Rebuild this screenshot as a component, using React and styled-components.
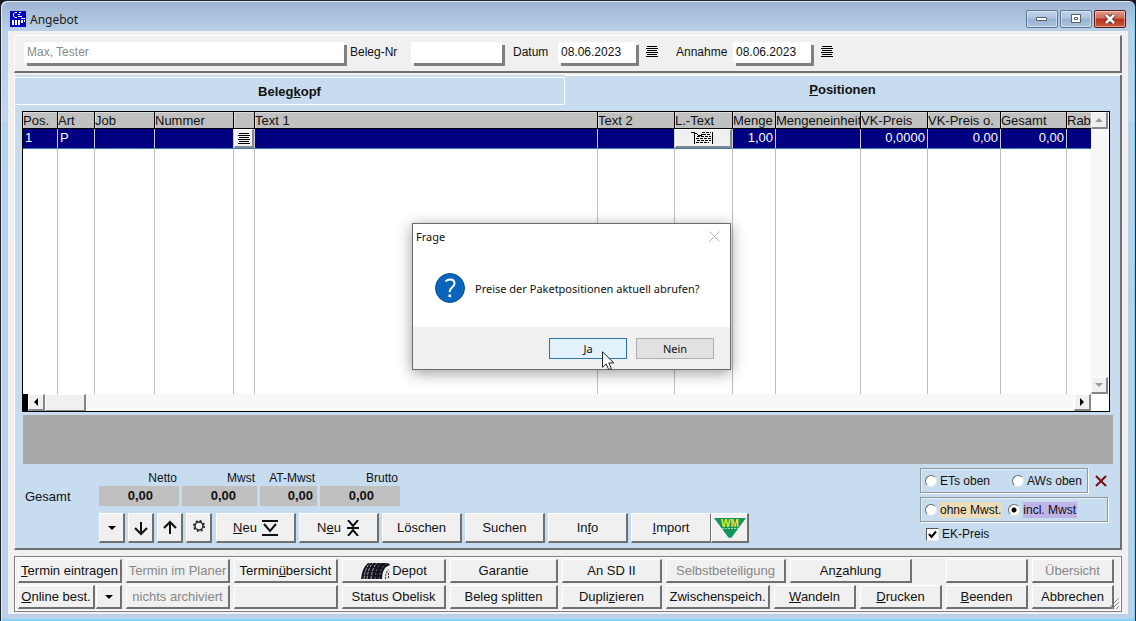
import React from 'react';
import styled, { createGlobalStyle, ThemeProvider } from 'styled-components';

const theme = {
  face: '#f0f0f0',
  panel: '#c7dcee',
  shade: '#6e7072',
  softShade: '#8f979d',
  light: '#ffffff',
  header: '#c0c0c0',
  selection: '#000080',
  ui: '"Liberation Sans", Arial, sans-serif',
  dialog: '"Noto Sans", "Open Sans", sans-serif',
};

const GlobalStyle = createGlobalStyle`
  * {
    box-sizing: border-box;
  }

  body {
    margin: 0;
    background: #15171c;
    font-family: ${theme.ui};
    font-size: 12px;
    color: #111;
  }

  button, input {
    font-family: inherit;
    color: inherit;
    margin: 0;
  }

  svg {
    display: block;
    flex: none;
  }
`;

const Window = styled.div`
  position: relative;
  display: flex;
  flex-direction: column;
  min-height: 100vh;
  border: 1px solid #1d2430;
  border-radius: 7px 7px 0 0;
  background: linear-gradient(#9db5d2, #bad0e8 30px, #c3d6ec 120px, #b9d0ea 121px, #bdd0e8);
  box-shadow: inset 1px 1px 0 #dfe9f4, inset -1px -2px 0 #7fd3ee;
`;

const TitleBar = styled.header`
  display: flex;
  align-items: center;
  height: 30px;
  padding: 6px 9px 0;
  gap: 4px;
`;

const Title = styled.h1`
  flex: 1;
  margin: 0;
  padding-top: 2px;
  font: 12px/16px ${({ theme }) => theme.dialog};
  color: #1b1b1b;
`;

const CaptionButtons = styled.div`
  display: flex;
  gap: 2px;
`;

const CaptionButton = styled.button`
  display: flex;
  align-items: center;
  justify-content: center;
  width: 32px;
  height: 18px;
  padding: 0;
  border: 1px solid ${({ $close }) => ($close ? '#5c1a14' : '#5f7896')};
  border-radius: 2px;
  background: ${({ $close }) =>
    $close
      ? 'linear-gradient(#dd9b8b, #cf6a55 45%, #b8321c 50%, #c9583c)'
      : 'linear-gradient(#bfd2e8, #adc4de 45%, #97b2d0 50%, #acc6e0)'};
  box-shadow: inset 0 0 0 1px rgba(255, 255, 255, 0.45);
`;

const Client = styled.main`
  display: flex;
  flex-direction: column;
  flex: 1;
  margin: 0 7px 7px;
  padding: 4px 6px 2px;
  background: ${({ theme }) => theme.face};
`;

const HeadPanel = styled.section`
  display: flex;
  align-items: flex-start;
  height: 38px;
  padding: 6px 9px 0;
  border: solid;
  border-width: 1px 2px 2px 1px;
  border-color: #fff ${({ theme }) => theme.shade} ${({ theme }) => theme.shade} #fff;
`;

const FieldLabel = styled.label`
  width: ${({ $width }) => $width}px;
  margin-left: ${({ $gap }) => $gap}px;
  line-height: 20px;
`;

const Field = styled.input`
  width: ${({ $width }) => $width}px;
  height: 21px;
  padding: 0 3px 2px;
  border: 0;
  background: #fff;
  box-shadow: 3px 3px 0 #808080;
  font-size: 12px;
  color: ${({ $muted }) => ($muted ? '#8a8a8a' : '#111')};
`;

const PlainButton = styled.button`
  padding: 0;
  border: 0;
  background: none;
`;

const PickButton = styled(PlainButton)`
  margin: 4px 0 0 10px;
`;

const TabPanel = styled.section`
  display: flex;
  flex-direction: column;
  flex: 1;
  margin-top: 2px;
  border: solid;
  border-width: 0 2px 2px 1px;
  border-color: #fff ${({ theme }) => theme.shade} ${({ theme }) => theme.shade} #fff;
  background: ${({ theme }) => theme.panel};
`;

const Tabs = styled.div`
  display: flex;
  align-items: flex-end;
  height: 30px;
`;

const Tab = styled.button`
  flex: ${({ $size }) => `${$size} 1 ${$size}px`};
  height: ${({ $active }) => ($active ? 30 : 28)}px;
  padding: ${({ $active }) => ($active ? '0 0 2px' : '0')};
  border: solid #fff;
  border-width: ${({ $active }) => ($active ? '1px 0 0' : '1px 1px 1px 0')};
  background: ${({ theme }) => theme.panel};
  font-size: 13px;
  font-weight: bold;
`;

const TabBody = styled.div`
  padding: 6px 7px 0 8px;
`;

const GridFrame = styled.div`
  display: grid;
  grid-template-columns: minmax(0, 1fr) 18px;
  margin-right: 3px;
  margin-left: -1px;
  border: 1px solid #000;
  background: #fff;
`;

const Table = styled.table`
  width: 100%;
  table-layout: fixed;
  border-collapse: separate;
  border-spacing: 0;
  font-size: 13px;
`;

const HeadCell = styled.th`
  height: 17px;
  padding: 2px 0 0;
  border: solid #000;
  border-width: 0 1px 1px 0;
  background: ${({ theme }) => theme.header};
  box-shadow: inset 1px 1px 0 #dcdcdc;
  font-weight: normal;
  line-height: 14px;
  text-align: left;
  white-space: nowrap;
  overflow: hidden;

  &:last-child {
    border-right: 0;
  }
`;

const Cell = styled.td`
  height: 20px;
  padding: ${({ $flush }) => ($flush ? '0' : '0 2px')};
  border: solid;
  border-width: 0 1px 1px 0;
  border-color: #c9c9d8 #c9c9d8 #3c7ba6;
  background: ${({ theme }) => theme.selection};
  color: #fff;
  line-height: 18px;
  text-align: ${({ $right }) => ($right ? 'right' : 'left')};
  vertical-align: top;

  &:last-child {
    border-right: 0;
  }
`;

const EmptyCell = styled.td`
  height: 245px;
  padding: 0;
  border-right: 1px solid #bdbdbd;

  &:last-child {
    border-right: 0;
  }
`;

const CellButton = styled.button`
  display: flex;
  align-items: center;
  justify-content: center;
  width: 100%;
  height: 19px;
  padding: 0;
  border: solid;
  border-width: 1px 2px 2px 1px;
  border-color: #fff #84888c #84888c #fff;
  background: ${({ theme }) => theme.face};
`;

const track = 'repeating-conic-gradient(#f2f2f2 0 25%, #fff 0 50%) 0 0 / 2px 2px';

const VScroll = styled.div`
  display: flex;
  flex-direction: column;
  justify-content: space-between;
  width: 17px;
  background: ${track};
`;

const HScroll = styled.div`
  display: flex;
  border-left: 5px solid #000;
  background: ${track};
`;

const ScrollButton = styled.button`
  display: flex;
  align-items: center;
  justify-content: center;
  width: 17px;
  height: 17px;
  padding: 0;
  border: solid;
  border-width: 1px 2px 2px 1px;
  border-color: #fff #84888c #84888c #fff;
  background: ${({ theme }) => theme.face};
`;

const Thumb = styled.div`
  width: 41px;
  margin-right: auto;
  border: solid;
  border-width: 1px 2px 1px 1px;
  border-color: #fff #84888c #84888c #fff;
  background: ${({ theme }) => theme.face};
`;

const Corner = styled.div`
  background: #fff;
`;

const InfoBar = styled.div`
  height: 49px;
  margin-top: 3px;
  background: #a9a9a9;
`;

const Footer = styled.div`
  display: flex;
  justify-content: space-between;
`;

const FooterLeft = styled.div`
  padding-top: 7px;
`;

const Totals = styled.div`
  display: flex;
  align-items: flex-end;
  gap: 3px;
`;

const TotalsCaption = styled.div`
  width: 73px;
  padding-left: 2px;
  font-size: 13px;
  line-height: 18px;
`;

const Total = styled.div`
  width: ${({ $width }) => $width}px;
  text-align: right;
`;

const TotalLabel = styled.div`
  padding-right: 2px;
  line-height: 15px;
`;

const TotalValue = styled.output`
  display: block;
  height: 20px;
  padding-right: ${({ $inset }) => $inset}px;
  background: ${({ theme }) => theme.header};
  font-size: 13px;
  font-weight: bold;
  line-height: 20px;
`;

const Toolbar = styled.div`
  display: flex;
  gap: 4px;
  padding: 7px 0 5px 76px;
`;

const ToolGroup = styled.div`
  display: flex;
  gap: 3px;
`;

const Pair = styled.div`
  display: flex;
`;

const Button = styled.button`
  display: flex;
  align-items: center;
  justify-content: center;
  padding: 0;
  border: solid;
  border-width: 1px 2px 2px 1px;
  border-color: #fff ${({ theme }) => theme.shade} ${({ theme }) => theme.shade} #fff;
  background: ${({ theme }) => theme.face};
  font-size: 13px;
  white-space: nowrap;

  &:disabled {
    color: #878787;
  }
`;

const ToolButton = styled(Button)`
  width: ${({ $width }) => $width || 80}px;
  height: 30px;
  gap: 5px;
  border-right-width: ${({ $joined }) => ($joined ? 1 : 2)}px;
`;

const Options = styled.div`
  width: 193px;
  padding-top: 4px;
`;

const OptionRow = styled.div`
  display: flex;
  align-items: center;
  margin-bottom: 4px;
  gap: 7px;
`;

const OptionBox = styled.div`
  display: flex;
  align-items: center;
  width: ${({ $width }) => $width}px;
  height: 25px;
  padding-left: 4px;
  gap: ${({ $gap }) => $gap}px;
  border: 1px solid ${({ theme }) => theme.softShade};
  box-shadow: 1px 1px 0 #fff, inset 1px 1px 0 #e4eff8;
`;

const Option = styled.label`
  display: flex;
  align-items: center;
  gap: 3px;
  white-space: nowrap;
`;

const OptionText = styled.span`
  padding-right: 1px;
  background: ${({ $tint }) => $tint || 'transparent'};
  line-height: 16px;
`;

const Radio = styled.input`
  appearance: none;
  width: 12px;
  height: 12px;
  border: 1px solid;
  border-color: #6c6c6c #e8e8e8 #e8e8e8 #6c6c6c;
  border-radius: 50%;
  background: #fff;

  &:checked {
    background: radial-gradient(circle, #000 0 2px, #fff 3px);
  }
`;

const CheckOption = styled(Option)`
  padding-left: 6px;
`;

const CheckBox = styled.span`
  display: grid;
  width: 13px;
  height: 13px;

  > * {
    grid-area: 1 / 1;
  }

  svg {
    pointer-events: none;
  }
`;

const Check = styled.input`
  appearance: none;
  width: 13px;
  height: 13px;
  border: 1px solid;
  border-color: #555 #e8e8e8 #e8e8e8 #555;
  background: #fff;
`;

const ActionPanel = styled.section`
  position: relative;
  display: flex;
  flex-direction: column;
  gap: 2px;
  margin-top: 6px;
  padding: 2px 7px 2px 3px;
  border: 1px solid #808080;
  box-shadow: inset 1px 1px 0 #fff, inset -1px -1px 0 #fff;
`;

const ActionRow = styled.div`
  display: flex;
  gap: 4px;
`;

const ActionButton = styled(Button)`
  flex: ${({ $size }) => `${$size} 1 ${$size}px`};
  min-width: 0;
  height: 24px;
  gap: 1px;
`;

const ActionPair = styled.div`
  display: flex;
  flex: 104 1 104px;
  gap: 1px;
`;

const Spacer = styled.div`
  flex: 26 1 26px;
`;

const Grip = styled.svg`
  position: absolute;
  right: 2px;
  bottom: 2px;
`;

const Dialog = styled.div`
  position: absolute;
  top: 222px;
  left: 411px;
  width: 319px;
  border: 1px solid #6b6b6b;
  background: #fff;
  box-shadow: 0 3px 14px rgba(0, 0, 0, 0.4);
  font-family: ${({ theme }) => theme.dialog};
  font-size: 11px;
`;

const DialogHead = styled.div`
  display: flex;
  align-items: center;
  justify-content: space-between;
  height: 25px;
  padding: 0 10px 0 3px;
`;

const DialogTitle = styled.h2`
  margin: 0;
  font-size: 11px;
  font-weight: normal;
`;

const DialogBody = styled.div`
  display: flex;
  align-items: center;
  gap: 10px;
  height: 78px;
  padding: 0 22px;
  white-space: nowrap;
`;

const DialogFoot = styled.div`
  display: flex;
  justify-content: flex-end;
  gap: 9px;
  height: 42px;
  padding: 11px 16px 0;
  background: #f0f0f0;
`;

const DialogButton = styled.button`
  width: 78px;
  height: 21px;
  padding: 0;
  border: 1px solid ${({ $hot }) => ($hot ? '#2a76a8' : '#adadad')};
  background: ${({ $hot }) => ($hot ? '#e3f1fb' : '#e1e1e1')};
  font-size: 11px;
  line-height: 19px;
`;

const Pointer = styled.svg`
  position: absolute;
  top: 127px;
  left: 189px;
`;

const AppIcon = () => (
  <svg width="16" height="16" viewBox="0 0 16 16">
    <path fill="#0404c4" d="M0 0h16v16H0z" />
    <path
      stroke="#fff"
      fill="none"
      d="M7 1.500H5L3.500 3v2L5 6.500h2M9 1.500h2M8 3.500h2M8 5.500h4M11 7.500h4"
    />
    <path fill="#fff" d="M2 9h2v5H2zM5 9h2v5H5zM8 9h2v5H8zM11 9h2v3h-2zM14 9h1v2h-1z" />
  </svg>
);

const LinesIcon = () => (
  <svg width="12" height="11" viewBox="0 0 12 11" shapeRendering="crispEdges">
    <path stroke="#000" d="M1 .5h10M0 2.500h12M1 4.500h10M0 6.500h12M1 8.500h10M0 10.500h12" />
  </svg>
);

const NoteIcon = () => (
  <svg width="24" height="14" viewBox="0 0 24 14" shapeRendering="crispEdges">
    <path stroke="#000" fill="none" d="M0 1.500h3M3.500 1v12M21.500 1v12M4 2l5 3 3-2" />
    <path
      stroke="#000"
      strokeDasharray="3 1"
      d="M11 1.500h9M6 5.500h14M12 3.500h8M5 7.500h15M6 9.500h14M5 11.500h13"
    />
  </svg>
);

const shapes = {
  down: 'M0 0h8L4 4z',
  up: 'M0 4h8L4 0z',
  left: 'M4 0v8L0 4z',
  right: 'M0 0v8l4-4z',
};

const Arrow = ({ dir, fill = '#000' }) => {
  const flat = dir === 'down' || dir === 'up';
  return (
    <svg width={flat ? 8 : 4} height={flat ? 4 : 8}>
      <path fill={fill} d={shapes[dir]} />
    </svg>
  );
};

const ToolIcon = ({ d, width = 16, height = 16, weight = 2, color = '#111' }) => (
  <svg width={width} height={height} fill="none" stroke={color} strokeWidth={weight}>
    <path d={d} />
  </svg>
);

const GearIcon = () => (
  <svg width="14" height="18" viewBox="0 0 14 18" fill="none" stroke="#222">
    <circle cx="7" cy="7" r="4" strokeWidth="1.500" />
    <circle cx="7" cy="7" r="5.200" strokeWidth="1.600" strokeDasharray="2 2.084" />
  </svg>
);

const WmLogo = () => (
  <svg width="34" height="22" viewBox="0 0 34 22">
    <path fill="#12955a" d="M1 1h32L19 20q-2 2-4 0z" />
    <text
      x="17"
      y="10"
      textAnchor="middle"
      fontFamily="Liberation Sans, sans-serif"
      fontSize="10"
      fontWeight="bold"
      fill="#f0e62c"
    >
      WM
    </text>
    <path stroke="#9fd8b5" strokeDasharray="2 1" d="M9 11.500h16" />
  </svg>
);

const TyreIcon = () => (
  <svg width="31" height="18" viewBox="0 0 31 18">
    <path fill="#14141e" d="M8 1h17q5 0 5 2l-4 2q-4 4-4 12H1Q2 6 8 1z" />
    <path
      stroke="#c4c4d0"
      strokeWidth=".9"
      strokeDasharray="3 1"
      fill="none"
      d="M4 17Q5 6 10 1M7 17Q8 6 13 1M11 17Q12 6 17 1"
    />
    <path
      stroke="#8a8a98"
      strokeWidth=".8"
      strokeDasharray="2 2"
      fill="none"
      d="M15 17Q16 6 21 1M19 17Q20 6 26 2"
    />
    <path fill="#e6e6ea" d="M24 17q0-8 4-11l2 1v10z" />
    <path stroke="#333" fill="none" strokeDasharray="2 1" d="M25.500 17q0-7 3-9M28.500 16v-6" />
  </svg>
);

const QuestionIcon = () => (
  <svg width="30" height="30" viewBox="0 0 30 30">
    <circle cx="15" cy="15" r="14.500" fill="#0a66bd" stroke="#0b4f95" />
    <path
      fill="none"
      stroke="#fff"
      strokeWidth="2"
      d="M10.500 8.500Q12 6.500 15 6.500q4.500 0 4.500 4 0 2-2.500 4t-2.200 4.700"
    />
    <path fill="#fff" d="M13.500 21.500h2.600v2.600h-2.600z" />
  </svg>
);

// "&" marks the letter that follows as the access key
const Mnemonic = ({ text }) => {
  const at = text.indexOf('&');
  if (at < 0) return <span>{text}</span>;
  return (
    <span>
      {text.slice(0, at)}
      <u>{text[at + 1]}</u>
      {text.slice(at + 2)}
    </span>
  );
};

const columns = [
  { title: 'Pos.', width: 35, value: '1' },
  { title: 'Art', width: 37, value: 'P' },
  { title: 'Job', width: 60 },
  { title: 'Nummer', width: 79 },
  { title: '', width: 21, icon: <LinesIcon />, hint: 'Auswahl' },
  { title: 'Text 1' },
  { title: 'Text 2', width: 77 },
  { title: 'L.-Text', width: 58, icon: <NoteIcon />, hint: 'Langtext' },
  { title: 'Menge', width: 43, value: '1,00', right: true },
  { title: 'Mengeneinheit', width: 85 },
  { title: 'VK-Preis', width: 67, value: '0,0000', right: true },
  { title: 'VK-Preis o.', width: 73, value: '0,00', right: true },
  { title: 'Gesamt', width: 66, value: '0,00', right: true },
  { title: 'Rab', width: 24 },
];

const totals = [
  { label: 'Netto', width: 80, inset: 26 },
  { label: 'Mwst', width: 75, inset: 21 },
  { label: 'AT-Mwst', width: 57, inset: 4 },
  { label: 'Brutto', width: 80, inset: 26 },
];

const upperActions = [
  { text: '&Termin eintragen', size: 104 },
  { text: 'Termin im Planer', size: 104, disabled: true },
  { text: 'Termin&übersicht', size: 104 },
  { text: 'Depot', size: 104, icon: <TyreIcon /> },
  { text: 'Garantie', size: 108 },
  { text: 'An SD II', size: 100 },
  { text: 'Selbstbeteiligung', size: 120, disabled: true },
  { text: 'An&zahlung', size: 122 },
  null,
  { text: '', size: 82 },
  { text: 'Übersicht', size: 82, disabled: true },
];

const lowerActions = [
  { text: 'nichts archiviert', size: 104, disabled: true },
  { text: '', size: 104 },
  { text: 'Status Obelisk', size: 104 },
  { text: 'Beleg splitten', size: 108 },
  { text: 'Dupli&zieren', size: 100 },
  { text: 'Zwischenspeich.', size: 104 },
  { text: '&Wandeln', size: 82 },
  { text: '&Drucken', size: 82 },
  { text: '&Beenden', size: 82 },
  { text: 'Abbrechen', size: 82 },
];

const renderAction = (action, index) =>
  action ? (
    <ActionButton key={index} $size={action.size} disabled={action.disabled}>
      {action.icon}
      <Mnemonic text={action.text} />
    </ActionButton>
  ) : (
    <Spacer key={index} />
  );

const PositionGrid = () => (
  <GridFrame>
    <Table>
      <colgroup>
        {columns.map((col, i) => (
          <col key={i} width={col.width} />
        ))}
      </colgroup>
      <thead>
        <tr>
          {columns.map((col, i) => (
            <HeadCell key={i}>{col.title}</HeadCell>
          ))}
        </tr>
      </thead>
      <tbody>
        <tr>
          {columns.map((col, i) => (
            <Cell key={i} $right={col.right} $flush={!!col.icon}>
              {col.icon ? <CellButton aria-label={col.hint}>{col.icon}</CellButton> : col.value}
            </Cell>
          ))}
        </tr>
        <tr>
          {columns.map((col, i) => (
            <EmptyCell key={i} />
          ))}
        </tr>
      </tbody>
    </Table>
    <VScroll>
      <ScrollButton aria-label="Nach oben">
        <Arrow dir="up" fill="#9a9a9a" />
      </ScrollButton>
      <ScrollButton aria-label="Nach unten">
        <Arrow dir="down" fill="#9a9a9a" />
      </ScrollButton>
    </VScroll>
    <HScroll>
      <ScrollButton aria-label="Nach links">
        <Arrow dir="left" />
      </ScrollButton>
      <Thumb />
      <ScrollButton aria-label="Nach rechts">
        <Arrow dir="right" />
      </ScrollButton>
    </HScroll>
    <Corner />
  </GridFrame>
);

const Question = () => (
  <Dialog role="dialog" aria-labelledby="frage">
    <DialogHead>
      <DialogTitle id="frage">Frage</DialogTitle>
      <PlainButton aria-label="Schließen">
        <ToolIcon
          d="M.5.5l10 10M10.500.5l-10 10"
          width={11}
          height={11}
          weight={1}
          color="#b4b4b4"
        />
      </PlainButton>
    </DialogHead>
    <DialogBody>
      <QuestionIcon />
      <span>Preise der Paketpositionen aktuell abrufen?</span>
    </DialogBody>
    <DialogFoot>
      <DialogButton $hot>Ja</DialogButton>
      <DialogButton>Nein</DialogButton>
    </DialogFoot>
    <Pointer width="13" height="20" viewBox="0 0 13 20">
      <path fill="#fff" stroke="#222" d="M.5.8v15.500l3.600-3.400 2.700 5.800 2.600-1.200-2.600-5.600h5z" />
    </Pointer>
  </Dialog>
);

const App = () => (
  <ThemeProvider theme={theme}>
    <GlobalStyle />
    <Window>
      <TitleBar>
        <AppIcon />
        <Title>Angebot</Title>
        <CaptionButtons>
          <CaptionButton aria-label="Minimieren">
            <svg width="12" height="6">
              <path fill="#fff" stroke="#56606c" d="M.5 1.500h10v3H.5z" />
            </svg>
          </CaptionButton>
          <CaptionButton aria-label="Maximieren">
            <svg width="12" height="10">
              <path fill="#fff" stroke="#56606c" d="M1.500.5h9v8h-9zM4.500 3.500h3v2h-3z" />
            </svg>
          </CaptionButton>
          <CaptionButton $close aria-label="Schließen">
            <svg width="12" height="10">
              <path stroke="#5a3030" strokeWidth="4.500" d="M2 1l8 8M10 1L2 9" />
              <path stroke="#fff" strokeWidth="2.500" d="M2 1l8 8M10 1L2 9" />
            </svg>
          </CaptionButton>
        </CaptionButtons>
      </TitleBar>

      <Client>
        <HeadPanel>
          <Field $width={320} $muted defaultValue="Max, Tester" aria-label="Kunde" />
          <FieldLabel htmlFor="beleg" $width={61} $gap={6}>
            Beleg-Nr
          </FieldLabel>
          <Field id="beleg" $width={91} />
          <FieldLabel htmlFor="datum" $width={45} $gap={11}>
            Datum
          </FieldLabel>
          <Field id="datum" $width={78} defaultValue="08.06.2023" />
          <PickButton aria-label="Datum wählen">
            <LinesIcon />
          </PickButton>
          <FieldLabel htmlFor="annahme" $width={57} $gap={18}>
            Annahme
          </FieldLabel>
          <Field id="annahme" $width={78} defaultValue="08.06.2023" />
          <PickButton aria-label="Annahme wählen">
            <LinesIcon />
          </PickButton>
        </HeadPanel>

        <TabPanel>
          <Tabs>
            <Tab $size={550}>
              <Mnemonic text="Beleg&kopf" />
            </Tab>
            <Tab $size={555} $active>
              <Mnemonic text="&Positionen" />
            </Tab>
          </Tabs>
          <TabBody>
            <PositionGrid />
            <InfoBar />
            <Footer>
              <FooterLeft>
                <Totals>
                  <TotalsCaption>Gesamt</TotalsCaption>
                  {totals.map((total) => (
                    <Total key={total.label} $width={total.width}>
                      <TotalLabel>{total.label}</TotalLabel>
                      <TotalValue $inset={total.inset}>0,00</TotalValue>
                    </Total>
                  ))}
                </Totals>
                <Toolbar>
                  <ToolGroup>
                    <ToolButton $width={26} aria-label="Mehr">
                      <Arrow dir="down" />
                    </ToolButton>
                    <ToolButton $width={26} aria-label="Nach unten">
                      <ToolIcon d="M8 2v12M2 8l6 6 6-6" />
                    </ToolButton>
                    <ToolButton $width={26} aria-label="Nach oben">
                      <ToolIcon d="M8 14V2M2 8l6-6 6 6" />
                    </ToolButton>
                    <ToolButton $width={26} aria-label="Einstellungen">
                      <GearIcon />
                    </ToolButton>
                  </ToolGroup>
                  <ToolGroup>
                    <ToolButton>
                      <Mnemonic text="&Neu" />
                      <ToolIcon d="M0 1h16M0 15h16M2 4l6 7 6-7" />
                    </ToolButton>
                    <ToolButton>
                      <Mnemonic text="N&eu" />
                      <ToolIcon d="M2 0l5 6 5-6M1 8h12M2 16l5-6 5 6" width={14} />
                    </ToolButton>
                    <ToolButton>Löschen</ToolButton>
                    <ToolButton>Suchen</ToolButton>
                    <ToolButton>
                      <Mnemonic text="In&fo" />
                    </ToolButton>
                    <Pair>
                      <ToolButton $joined>
                        <Mnemonic text="&Import" />
                      </ToolButton>
                      <ToolButton $width={38} aria-label="WM">
                        <WmLogo />
                      </ToolButton>
                    </Pair>
                  </ToolGroup>
                </Toolbar>
              </FooterLeft>

              <Options>
                <OptionRow>
                  <OptionBox $width={168} $gap={21}>
                    <Option>
                      <Radio type="radio" name="sort" />
                      <OptionText>ETs oben</OptionText>
                    </Option>
                    <Option>
                      <Radio type="radio" name="sort" />
                      <OptionText>AWs oben</OptionText>
                    </Option>
                  </OptionBox>
                  <PlainButton aria-label="Sortierung aufheben">
                    <svg width="12" height="12">
                      <path stroke="#7a0c14" strokeWidth="2" d="M1 1l10 10M11 1L1 11" />
                    </svg>
                  </PlainButton>
                </OptionRow>
                <OptionRow>
                  <OptionBox $width={188} $gap={6}>
                    <Option>
                      <Radio type="radio" name="mwst" />
                      <OptionText $tint="#ecdcb8">ohne Mwst.</OptionText>
                    </Option>
                    <Option>
                      <Radio type="radio" name="mwst" defaultChecked />
                      <OptionText $tint="#beb4e8">incl. Mwst</OptionText>
                    </Option>
                  </OptionBox>
                </OptionRow>
                <CheckOption>
                  <CheckBox>
                    <Check type="checkbox" defaultChecked />
                    <svg width="13" height="13">
                      <path fill="none" stroke="#000" strokeWidth="2" d="M3 6l2.500 3L10 3.500" />
                    </svg>
                  </CheckBox>
                  <OptionText>EK-Preis</OptionText>
                </CheckOption>
              </Options>
            </Footer>
          </TabBody>
        </TabPanel>

        <ActionPanel>
          <ActionRow>{upperActions.map(renderAction)}</ActionRow>
          <ActionRow>
            <ActionPair>
              <ActionButton $size={77}>
                <Mnemonic text="&Online best." />
              </ActionButton>
              <ActionButton $size={26} aria-label="Weitere">
                <Arrow dir="down" />
              </ActionButton>
            </ActionPair>
            {lowerActions.map(renderAction)}
          </ActionRow>
          <Grip width="12" height="12">
            <path stroke="#8a8a8a" d="M1 12L12 1M5 12l7-7M9 12l3-3" />
          </Grip>
        </ActionPanel>
      </Client>

      <Question />
    </Window>
  </ThemeProvider>
);

export default App;
